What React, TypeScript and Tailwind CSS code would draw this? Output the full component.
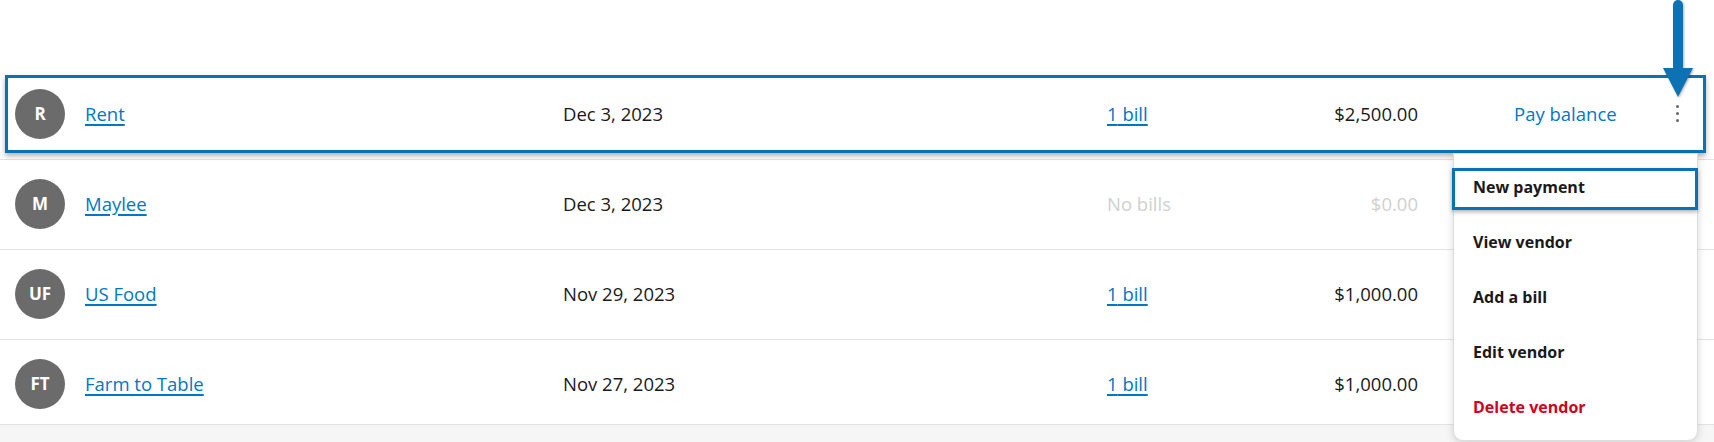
type Vendor = {
  initials: string;
  name: string;
  date: string;
  bills: number;
  amount: string;
};

const vendors: Vendor[] = [
  { initials: 'R', name: 'Rent', date: 'Dec 3, 2023', bills: 1, amount: '$2,500.00' },
  { initials: 'M', name: 'Maylee', date: 'Dec 3, 2023', bills: 0, amount: '$0.00' },
  { initials: 'UF', name: 'US Food', date: 'Nov 29, 2023', bills: 1, amount: '$1,000.00' },
  { initials: 'FT', name: 'Farm to Table', date: 'Nov 27, 2023', bills: 1, amount: '$1,000.00' },
];

const menuItems = ['New payment', 'View vendor', 'Add a bill', 'Edit vendor'];

const VendorRow = ({ vendor, last, first }: { vendor: Vendor; last: boolean; first: boolean }) => {
  const empty = vendor.bills === 0;
  return (
    <div
      className={`flex items-center border-b border-[#e3e3e3] pl-[15px] ${
        last ? 'h-[85px] pt-[4px]' : 'h-[90px] pb-[2px]'
      }`}
    >
      <div className="w-[50px] h-[50px] rounded-full bg-[#6b6b6b] flex items-center justify-center text-white font-bold text-[17px] shrink-0">
        {vendor.initials}
      </div>
      <div className="ml-[20px] w-[478px]">
        <a href="#" className="text-[#0077c5] underline underline-offset-[3px] decoration-[1.5px]">
          {vendor.name}
        </a>
      </div>
      <div className="w-[544px] text-[#1a1a1a]">{vendor.date}</div>
      <div className="w-[150px]">
        {empty ? (
          <span className="text-[#d0d0d0]">No bills</span>
        ) : (
          <a href="#" className="text-[#0077c5] underline underline-offset-[3px] decoration-[1.5px]">
            {vendor.bills} bill
          </a>
        )}
      </div>
      <div className={`w-[161px] text-right ${empty ? 'text-[#d0d0d0]' : 'text-[#1a1a1a]'}`}>
        {vendor.amount}
      </div>
      {first && (
        <>
          <div className="w-[258px] pl-[96px]">
            <button className="text-[#0077c5]">Pay balance</button>
          </div>
          <div className="flex flex-col gap-[4px] mt-[-1px]">
            <span className="w-[3px] h-[3px] rounded-full bg-[#666]" />
            <span className="w-[3px] h-[3px] rounded-full bg-[#666]" />
            <span className="w-[3px] h-[3px] rounded-full bg-[#666]" />
          </div>
        </>
      )}
    </div>
  );
};

export default function App() {
  return (
    <div
      className="relative w-[1714px] h-[442px] bg-white overflow-hidden text-[18.5px]"
      style={{ fontFamily: '"Open Sans", "Noto Sans", sans-serif' }}
    >
      <div className="h-[70px]" />
      {vendors.map((v, i) => (
        <VendorRow key={v.name} vendor={v} first={i === 0} last={i === vendors.length - 1} />
      ))}
      <div className="h-[20px] bg-[#f6f6f6]" />

      {/* highlight box around first row */}
      <div className="absolute left-[5px] top-[75px] w-[1701px] h-[78px] border-[3px] border-[#0a72b4] shadow-[0_3px_5px_rgba(0,0,0,0.3)]" />

      {/* dropdown menu */}
      <div className="absolute left-[1453px] top-[153px] w-[245px] h-[288px] bg-white border border-[#dcdcdc] rounded-b-[10px] shadow-[0_2px_8px_rgba(0,0,0,0.15)] pt-[5px]">
        {menuItems.map((label) => (
          <div key={label} className="h-[55px] flex items-center pl-[19px] font-bold text-[16px] text-[#1a1a1a]">
            {label}
          </div>
        ))}
        <div className="h-[55px] flex items-center pl-[19px] font-bold text-[16px] text-[#d0021b]">
          Delete vendor
        </div>
      </div>

      {/* highlight box around first menu item */}
      <div className="absolute left-[1452px] top-[168px] w-[246px] h-[42px] border-[3px] border-[#0a72b4] shadow-[0_2px_4px_rgba(0,0,0,0.3)]" />

      {/* arrow pointing at the kebab */}
      <svg className="absolute left-[1660px] top-0" width="36" height="100" viewBox="0 0 36 100">
        <defs>
          <filter id="sh" x="-50%" y="-10%" width="200%" height="130%">
            <feDropShadow dx="1" dy="1" stdDeviation="1" floodOpacity="0.3" />
          </filter>
        </defs>
        <g filter="url(#sh)" fill="#0a72b4">
          <rect x="13" y="0" width="10" height="72" rx="5" />
          <polygon points="3,68 33,68 18,97" />
        </g>
      </svg>
    </div>
  );
}
